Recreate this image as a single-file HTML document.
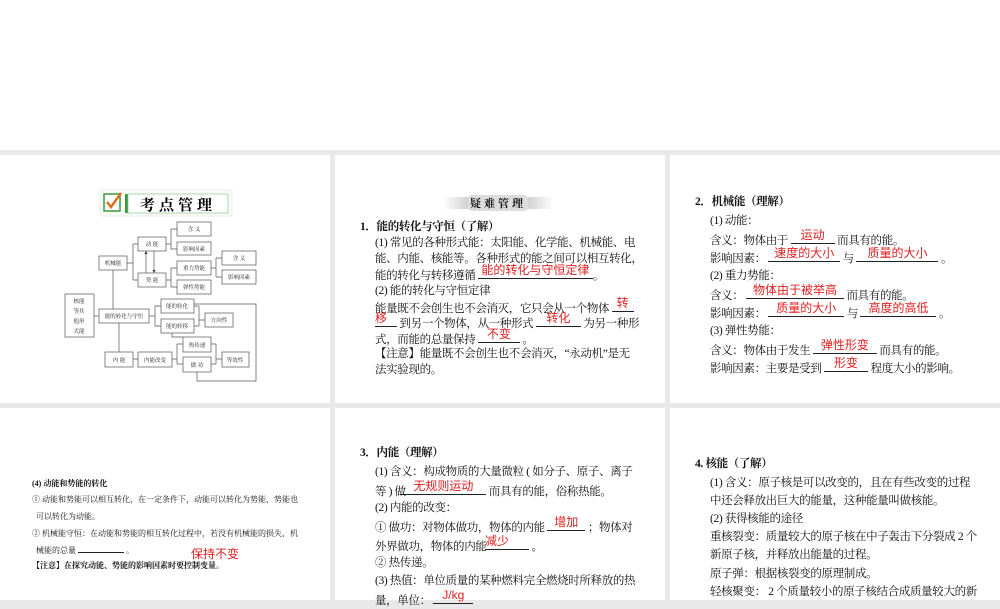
<!DOCTYPE html>
<html><head><meta charset="utf-8"><style>
*{margin:0;padding:0;box-sizing:border-box}
body{width:1000px;height:600px;background:#e9e9e9;position:relative;overflow:hidden;font-family:"Liberation Serif","Noto Serif CJK SC",serif;color:#111}
.top{position:absolute;left:0;top:0;width:1000px;height:150px;background:#fff}
.card{position:absolute;background:#fff;overflow:hidden}
.l{position:absolute;white-space:nowrap;font-size:11.5px;line-height:16px;letter-spacing:-0.35px}
.b{display:inline-block;border-bottom:1px solid #222;position:relative;height:13px;vertical-align:baseline;text-align:center}
.r{position:absolute;left:0;right:0;top:-4px;color:#e02020;font-family:"Liberation Sans","Noto Sans CJK SC",sans-serif;font-size:12px;white-space:nowrap;text-align:center;letter-spacing:0}
.s{font-size:8px;line-height:10px;letter-spacing:0}
.bold{font-weight:bold}
</style></head><body>
<div class="top"></div>

<!-- card 1 -->
<div class="card" style="left:0;top:155px;width:330px;height:248px">
<svg width="330" height="248" style="position:absolute;left:0;top:0" font-family="Noto Serif CJK SC,serif" font-size="5.5" text-anchor="middle">
<g transform="translate(0,-155)">
<rect x="100" y="190" width="132" height="26" fill="#fafafa" stroke="#eee"/>
<rect x="104" y="194" width="16" height="17" fill="#fff" stroke="#3a9a3a" stroke-width="1.5"/>
<path d="M107 202 L111 207 L121 193" stroke="#e07020" stroke-width="2.5" fill="none"/>
<rect x="125" y="194" width="3" height="19" fill="#3a9a3a"/>
<rect x="128" y="194" width="100" height="19" fill="#fff" stroke="#8c8" stroke-width="0.7"/>
<text x="178" y="210" font-size="15" font-weight="bold" letter-spacing="4">考点管理</text>
<g fill="#fff" stroke="#555" stroke-width="0.7">
<rect x="138" y="237" width="28" height="14"/><rect x="177" y="222" width="34" height="14"/><rect x="177" y="242" width="34" height="13"/>
<rect x="99" y="256" width="28" height="14"/><rect x="177" y="261" width="34" height="14"/><rect x="222" y="251" width="34" height="14"/>
<rect x="222" y="270" width="34" height="14"/><rect x="138" y="273" width="28" height="14"/><rect x="177" y="280" width="34" height="14"/>
<rect x="65" y="294" width="29" height="43"/><rect x="99" y="309" width="50" height="14"/><rect x="161" y="299" width="33" height="14"/>
<rect x="161" y="319" width="33" height="14"/><rect x="205" y="313" width="28" height="14"/><rect x="183" y="337" width="28" height="15"/>
<rect x="105" y="352" width="28" height="15"/><rect x="138" y="352" width="34" height="15"/><rect x="183" y="357" width="28" height="15"/>
<rect x="222" y="352" width="27" height="15"/>
</g>
<g stroke="#555" stroke-width="0.7" fill="none">
<path d="M127 263H133M133 244V280M133 244H138M133 280H138"/>
<path d="M166 244H171M171 229V249M171 229H177M171 249H177"/>
<path d="M166 280H171M171 268V287M171 268H177M171 287H177"/>
<path d="M211 268H216M216 258V277M216 258H222M216 277H222"/>
<path d="M146 251V273M154 251V273"/>
<path d="M113 270V309M94 316H99M149 316H155M155 306V326M155 306H161M155 326H161"/>
<path d="M194 306H199M199 306V326M194 326H199M199 320H205"/>
<path d="M119 323V352M133 359H138M172 359H177M177 344V364M177 344H183M177 364H183M211 344H216M216 344V364M211 364H216M216 359H222"/>
<path d="M172 333V337H183"/>
<path d="M194 304H256V381H197V372"/>
</g>
<path d="M146 251l-1.5 3h3z M154 273l-1.5 -3h3z" fill="#333"/>
<g fill="#222">
<text x="152" y="246">动 能</text><text x="194" y="231">含 义</text><text x="194" y="251">影响因素</text>
<text x="113" y="265">机械能</text><text x="194" y="270">重力势能</text><text x="239" y="260">含 义</text>
<text x="239" y="279">影响因素</text><text x="152" y="282">势 能</text><text x="194" y="289">弹性势能</text>
<text x="79" y="303">核能</text><text x="79" y="313">等其</text><text x="79" y="323">他形</text><text x="79" y="333">式能</text>
<text x="124" y="318">能的转化与守恒</text><text x="177" y="308">能的转化</text><text x="177" y="328">能的转移</text>
<text x="219" y="322">方向性</text><text x="197" y="347">热传递</text><text x="119" y="362">内 能</text>
<text x="155" y="362">内能改变</text><text x="197" y="367">做 功</text><text x="235" y="362">等效性</text>
</g></g></svg>
</div>

<!-- card 2 -->
<div class="card" style="left:335px;top:155px;width:330px;height:248px">
<div style="position:absolute;left:108px;top:42px;width:110px;height:12px;background:linear-gradient(90deg,#fff,#ccc 25%,#ccc 75%,#fff)"></div>
<div style="position:absolute;left:133px;top:40px;width:60px;height:16px;font-size:11px;font-weight:bold;letter-spacing:3px;text-align:center;font-family:'Noto Serif CJK SC',serif;background:#ddd;border-radius:4px;line-height:16px">疑难管理</div>
</div>
<div class="l bold" style="left:360px;top:219px">1．能的转化与守恒（了解）</div>
<div class="l" style="left:375px;top:235px">(1) 常见的各种形式能：太阳能、化学能、机械能、电</div>
<div class="l" style="left:375px;top:251px">能、内能、核能等。各种形式的能之间可以相互转化，</div>
<div class="l" style="left:375px;top:266px">能的转化与转移遵循 <span class="b" style="width:115px"><span class="r">能的转化与守恒定律</span></span>。</div>
<div class="l" style="left:375px;top:283px">(2) 能的转化与守恒定律</div>
<div class="l" style="left:375px;top:299px">能量既不会创生也不会消灭，它只会从一个物体 <span class="b" style="width:22px"><span class="r">转</span></span></div>
<div class="l" style="left:375px;top:314px"><span class="b" style="width:22px"><span class="r" style="text-align:left">移</span></span> 到另一个物体，从一种形式 <span class="b" style="width:45px"><span class="r">转化</span></span> 为另一种形</div>
<div class="l" style="left:375px;top:330px">式，而能的总量保持 <span class="b" style="width:42px"><span class="r">不变</span></span> 。</div>
<div class="l" style="left:375px;top:346px">【注意】能量既不会创生也不会消灭，“永动机”是无</div>
<div class="l" style="left:375px;top:362px">法实验现的。</div>

<!-- card 3 -->
<div class="card" style="left:670px;top:155px;width:330px;height:248px"></div>
<div class="l bold" style="left:695px;top:194px">2．机械能（理解）</div>
<div class="l" style="left:710px;top:213px">(1) 动能：</div>
<div class="l" style="left:710px;top:231px">含义：物体由于 <span class="b" style="width:44px"><span class="r">运动</span></span> 而具有的能。</div>
<div class="l" style="left:710px;top:249px">影响因素： <span class="b" style="width:72px"><span class="r">速度的大小</span></span> 与 <span class="b" style="width:82px"><span class="r">质量的大小</span></span> 。</div>
<div class="l" style="left:710px;top:268px">(2) 重力势能：</div>
<div class="l" style="left:710px;top:286px">含义： <span class="b" style="width:98px"><span class="r">物体由于被举高</span></span> 而具有的能。</div>
<div class="l" style="left:710px;top:304px">影响因素： <span class="b" style="width:76px"><span class="r">质量的大小</span></span> 与 <span class="b" style="width:76px"><span class="r">高度的高低</span></span> 。</div>
<div class="l" style="left:710px;top:323px">(3) 弹性势能：</div>
<div class="l" style="left:710px;top:341px">含义：物体由于发生 <span class="b" style="width:64px"><span class="r">弹性形变</span></span> 而具有的能。</div>
<div class="l" style="left:710px;top:359px">影响因素：主要是受到 <span class="b" style="width:44px"><span class="r">形变</span></span> 程度大小的影响。</div>

<!-- card 4 -->
<div class="card" style="left:0;top:408px;width:330px;height:192px"></div>
<div class="l s bold" style="left:32px;top:479px">(4) 动能和势能的转化</div>
<div class="l s" style="left:32px;top:495px">① 动能和势能可以相互转化，在一定条件下，动能可以转化为势能，势能也</div>
<div class="l s" style="left:36px;top:512px">可以转化为动能。</div>
<div class="l s" style="left:32px;top:529px">② 机械能守恒：在动能和势能的相互转化过程中，若没有机械能的损失，机</div>
<div class="l s" style="left:36px;top:545px">械能的总量 <span style="display:inline-block;width:46px;border-bottom:1px solid #222;height:8px"></span> 。</div>
<div class="l" style="left:191px;top:546px;color:#e02020;font-family:'Liberation Sans','Noto Sans CJK SC',sans-serif;font-size:12px;letter-spacing:0">保持不变</div>
<div class="l s bold" style="left:32px;top:561px">【注意】在探究动能、势能的影响因素时要控制变量。</div>

<!-- card 5 -->
<div class="card" style="left:335px;top:408px;width:330px;height:192px"></div>
<div class="l bold" style="left:360px;top:445px">3．内能（理解）</div>
<div class="l" style="left:375px;top:464px">(1) 含义：构成物质的大量微粒 ( 如分子、原子、离子</div>
<div class="l" style="left:375px;top:482px">等 ) 做 <span class="b" style="width:86px;margin-left:-8px"><span class="r">无规则运动</span></span> 而具有的能，俗称热能。</div>
<div class="l" style="left:375px;top:500px">(2) 内能的改变：</div>
<div class="l" style="left:375px;top:518px">① 做功：对物体做功，物体的内能 <span class="b" style="width:38px"><span class="r">增加</span></span> ；物体对</div>
<div class="l" style="left:375px;top:537px">外界做功，物体的内能 <span class="b" style="width:44px;margin-left:-4px"><span class="r" style="text-align:left">减少</span></span> 。</div>
<div class="l" style="left:375px;top:555px">② 热传递。</div>
<div class="l" style="left:375px;top:573px">(3) 热值：单位质量的某种燃料完全燃烧时所释放的热</div>
<div class="l" style="left:375px;top:591px">量，单位： <span class="b" style="width:40px"><span class="r">J/kg</span></span></div>

<!-- card 6 -->
<div class="card" style="left:670px;top:408px;width:330px;height:192px"></div>
<div class="l bold" style="left:695px;top:456px">4. 核能（了解）</div>
<div class="l" style="left:710px;top:475px">(1) 含义：原子核是可以改变的，且在有些改变的过程</div>
<div class="l" style="left:710px;top:493px">中还会释放出巨大的能量，这种能量叫做核能。</div>
<div class="l" style="left:710px;top:511px">(2) 获得核能的途径</div>
<div class="l" style="left:710px;top:529px">重核裂变：质量较大的原子核在中子轰击下分裂成 2 个</div>
<div class="l" style="left:710px;top:547px">新原子核，并释放出能量的过程。</div>
<div class="l" style="left:710px;top:566px">原子弹：根据核裂变的原理制成。</div>
<div class="l" style="left:710px;top:584px">轻核聚变： 2 个质量较小的原子核结合成质量较大的新</div>
</body></html>
